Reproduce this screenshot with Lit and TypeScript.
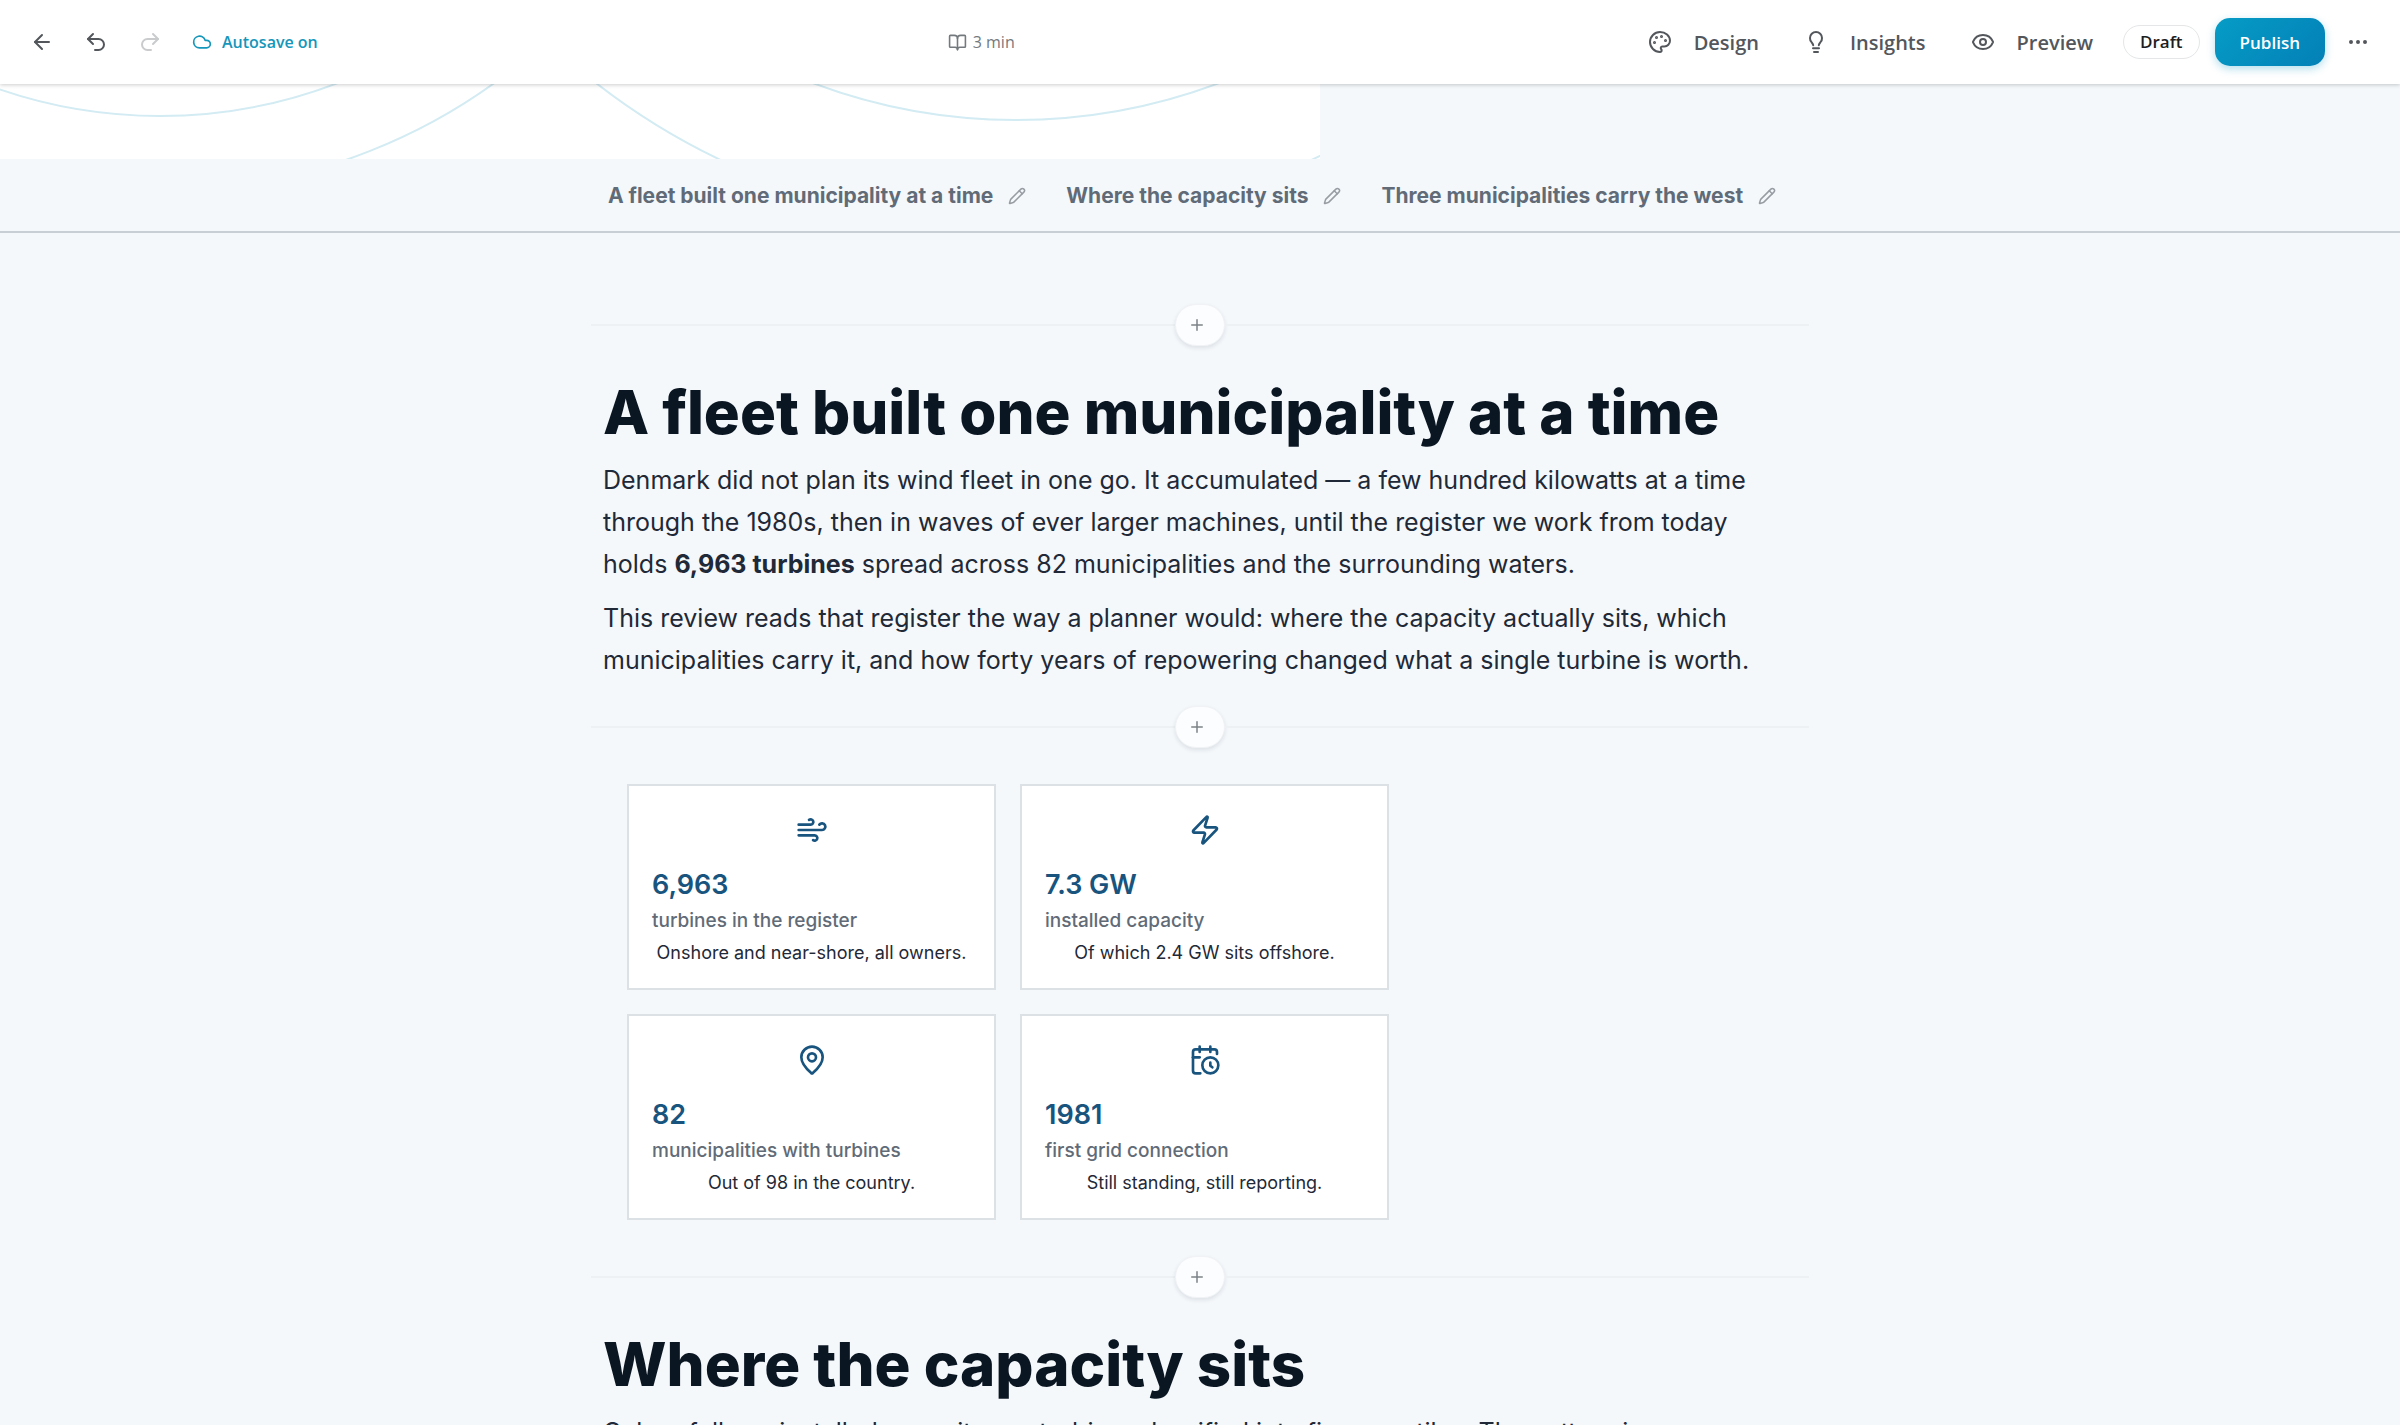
import { LitElement, html, css, svg, nothing } from "lit";
import { customElement, property } from "lit/decorators.js";

const icons: Record<string, unknown> = {
  back: svg`<path d="m12 19-7-7 7-7"/><path d="M19 12H5"/>`,
  undo: svg`<path d="M9 14 4 9l5-5"/><path d="M4 9h10.5a5.5 5.5 0 0 1 0 11H11"/>`,
  redo: svg`<path d="m15 14 5-5-5-5"/><path d="M20 9H9.500a5.500 5.500 0 0 0 0 11H13"/>`,
  cloud: svg`<path d="M17.5 19H9a7 7 0 1 1 6.710-9h1.790a4.500 4.500 0 1 1 0 9Z"/>`,
  book: svg`<path d="M12 7v14"/><path d="M3 18a1 1 0 0 1-1-1V4a1 1 0 0 1 1-1h5a4 4 0 0 1 4 4 4 4 0 0 1 4-4h5a1 1 0 0 1 1 1v13a1 1 0 0 1-1 1h-6a3 3 0 0 0-3 3 3 3 0 0 0-3-3z"/>`,
  palette: svg`<circle cx="13.500" cy="6.500" r=".5" fill="currentColor"/><circle cx="17.500" cy="10.500" r=".5" fill="currentColor"/><circle cx="8.500" cy="7.500" r=".5" fill="currentColor"/><circle cx="6.500" cy="12.500" r=".5" fill="currentColor"/><path d="M12 2C6.500 2 2 6.500 2 12s4.500 10 10 10c.926 0 1.648-.746 1.648-1.688 0-.437-.18-.835-.437-1.125-.29-.289-.438-.652-.438-1.125a1.640 1.640 0 0 1 1.668-1.668h1.996c3.051 0 5.555-2.503 5.555-5.554C21.965 6.012 17.461 2 12 2z"/>`,
  bulb: svg`<path d="M9.200 15.200c-.2-1.200-.8-1.900-1.500-2.800A5.800 5.800 0 0 1 6 8a6 6 0 0 1 12 0 5.800 5.800 0 0 1-1.700 4.400c-.7.9-1.300 1.600-1.500 2.800"/><path d="M9 18.200h6"/><path d="M10 22h4"/>`,
  eye: svg`<path d="M2.062 12.348a1 1 0 0 1 0-.696 10.750 10.750 0 0 1 19.876 0 1 1 0 0 1 0 .696 10.750 10.750 0 0 1-19.876 0"/><circle cx="12" cy="12" r="3"/>`,
  more: svg`<circle cx="12" cy="12" r="1"/><circle cx="19" cy="12" r="1"/><circle cx="5" cy="12" r="1"/>`,
  pencil: svg`<path d="M21.174 6.812a1 1 0 0 0-3.986-3.987L3.842 16.174a2 2 0 0 0-.5.830l-1.321 4.352a.5.5 0 0 0 .623.622l4.353-1.320a2 2 0 0 0 .830-.497z"/><path d="m15 5 4 4"/>`,
  plus: svg`<path d="M5 12h14"/><path d="M12 5v14"/>`,
  wind: svg`<path d="M12.800 19.600A2 2 0 1 0 14 16H2"/><path d="M17.500 8a2.500 2.500 0 1 1 2 4H2"/><path d="M9.800 4.400A2 2 0 1 1 11 8H2"/>`,
  zap: svg`<path d="M4 14a1 1 0 0 1-.78-1.630l9.900-10.200a.5.5 0 0 1 .86.460l-1.920 6.020A1 1 0 0 0 13 10h7a1 1 0 0 1 .78 1.630l-9.900 10.200a.5.5 0 0 1-.86-.460l1.920-6.020A1 1 0 0 0 11 14z"/>`,
  pin: svg`<path d="M20 10c0 4.993-5.539 10.193-7.399 11.799a1 1 0 0 1-1.202 0C9.539 20.193 4 14.993 4 10a8 8 0 0 1 16 0"/><circle cx="12" cy="10" r="3"/>`,
  calendar: svg`<path d="M21 7.500V6a2 2 0 0 0-2-2H5a2 2 0 0 0-2 2v14a2 2 0 0 0 2 2h3.500"/><path d="M16 2v4"/><path d="M8 2v4"/><path d="M3 10h5"/><path d="M17.500 17.500 16 16.300V14"/><circle cx="16" cy="16" r="6"/>`,
};

@customElement("ui-icon")
class UiIcon extends LitElement {
  @property() name = "";
  @property({ type: Number }) size = 20;

  static styles = css`
    :host { display: inline-flex; flex: none; }
    svg { display: block; }
  `;

  render() {
    return html`<svg width=${this.size} height=${this.size} viewBox="0 0 24 24" fill="none"
      stroke="currentColor" stroke-width="2" stroke-linecap="round"
      stroke-linejoin="round" aria-hidden="true">${icons[this.name] ?? nothing}</svg>`;
  }
}

@customElement("insert-row")
class InsertRow extends LitElement {
  static styles = css`
    :host { display: flex; align-items: center; height: 48px; }
    .line { flex: 1; height: 2px; background: #edf1f4; }
    .add {
      display: flex; align-items: center; box-sizing: border-box;
      width: 50px; height: 42px; padding: 0 12px; border: 1px solid #f0f2f5;
      border-radius: 21px; background: #fcfdfe; color: #7c8287;
      box-shadow: 0 2px 4px rgba(20, 30, 45, 0.1); cursor: pointer;
    }
  `;

  render() {
    return html`
      <span class="line"></span>
      <button class="add" aria-label="Add block"><ui-icon name="plus" size="18"></ui-icon></button>
      <span class="line"></span>
    `;
  }
}

const sections = [
  "A fleet built one municipality at a time",
  "Where the capacity sits",
  "Three municipalities carry the west",
];

const stats = [
  { icon: "wind", value: "6,963", label: "turbines in the register", note: "Onshore and near-shore, all owners." },
  { icon: "zap", value: "7.3 GW", label: "installed capacity", note: "Of which 2.4 GW sits offshore." },
  { icon: "pin", value: "82", label: "municipalities with turbines", note: "Out of 98 in the country." },
  { icon: "calendar", value: "1981", label: "first grid connection", note: "Still standing, still reporting." },
];

@customElement("app-root")
class AppRoot extends LitElement {
  static styles = css`
    :host {
      display: block; height: 100vh; overflow: hidden;
      background: #f4f8fb; color: #1f2937;
      font-family: Inter, "Liberation Sans", sans-serif;
    }
    button { font: inherit; margin: 0; cursor: pointer; }
    .topbar {
      position: relative; display: flex; justify-content: space-between;
      align-items: center; box-sizing: border-box; height: 84px; padding: 0 24px;
      background: #fff; box-shadow: 0 1px 4px rgba(0, 0, 0, 0.2);
      font-family: "Open Sans", "Noto Sans", sans-serif; color: #53575c;
    }
    .left, .right, .reading, .autosave { display: flex; align-items: center; }
    .left { gap: 18px; }
    .tool {
      display: flex; align-items: center; justify-content: center;
      width: 36px; height: 36px; padding: 0; border: 0; background: none; color: #53575c;
    }
    .tool:disabled { color: #c9cbcd; }
    .autosave { gap: 10px; padding-left: 6px; font-size: 16px; font-weight: 600; color: #1596ba; }
    .reading { gap: 6px; padding-left: 12px; font-size: 16px; color: #74797e; }
    .right { gap: 15px; }
    .menu {
      display: flex; align-items: center; gap: 22px; padding: 0 15px; border: 0;
      background: none; color: #53575c; font-size: 20px; font-weight: 600;
    }
    .status {
      height: 34px; padding: 0 16px; border: 1px solid #e4e6e8; border-radius: 17px;
      background: #fff; color: #1b1e22; font-size: 17px; font-weight: 600; line-height: 32px;
    }
    .publish {
      height: 48px; padding: 0 25px; border: 0; border-radius: 15px; color: #fff;
      background: linear-gradient(135deg, #069cc6, #0380b7);
      box-shadow: 0 3px 9px rgba(6, 150, 195, 0.3);
      font-size: 17px; font-weight: 600;
    }
    .cover { display: block; width: 55%; height: 75px; background: #fff; }
    .sections {
      display: flex; justify-content: center; gap: 24px; box-sizing: border-box;
      height: 74px; padding: 19px 0; border-bottom: 2px solid #c8d0d5;
    }
    .tab { display: flex; align-items: center; gap: 15px; height: 35px; padding-right: 16px; }
    .tab a { color: #616b77; font-size: 21px; font-weight: 700; text-decoration: none; }
    .edit { display: flex; padding: 0; border: 0; background: none; color: #979da3; }
    .content { max-width: 1218px; margin: 68px auto 0; }
    .text { padding: 0 12px 10px; }
    h2 {
      margin: 0; padding: 25px 0 8px; color: #0b1623;
      font-size: 60px; font-weight: 800; line-height: 77px;
    }
    p { margin: 0 0 12px; font-size: 25px; line-height: 42px; color: #1f2937; }
    .stats {
      display: grid; grid-template-columns: repeat(2, 369px); gap: 24px;
      padding: 33px 36px;
    }
    .card {
      display: flex; flex-direction: column; box-sizing: border-box;
      padding: 28px 23px 20px; border: 2px solid #dce1e5; background: #fff;
    }
    .card ui-icon { align-self: center; color: #18547e; }
    .value { margin-top: 20px; color: #18547e; font-size: 27px; font-weight: 600; line-height: 38px; }
    .label { color: #616b77; font-size: 19px; font-weight: 500; line-height: 34px; }
    .note { color: #1f2937; font-size: 18px; line-height: 30px; text-align: center; }
  `;

  render() {
    return html`
      <header class="topbar">
        <div class="left">
          <button class="tool" aria-label="Back"><ui-icon name="back" size="24"></ui-icon></button>
          <button class="tool" aria-label="Undo"><ui-icon name="undo" size="24"></ui-icon></button>
          <button class="tool" aria-label="Redo" disabled><ui-icon name="redo" size="24"></ui-icon></button>
          <span class="autosave"><ui-icon name="cloud"></ui-icon>Autosave on</span>
        </div>
        <div class="reading"><ui-icon name="book" size="19"></ui-icon>3 min</div>
        <div class="right">
          <button class="menu"><ui-icon name="palette" size="24"></ui-icon>Design</button>
          <button class="menu"><ui-icon name="bulb" size="24"></ui-icon>Insights</button>
          <button class="menu"><ui-icon name="eye" size="24"></ui-icon>Preview</button>
          <button class="status">Draft</button>
          <button class="publish">Publish</button>
          <button class="tool" aria-label="More"><ui-icon name="more" size="24"></ui-icon></button>
        </div>
      </header>
      <svg class="cover" viewBox="0 84 1320 75" preserveAspectRatio="xMinYMin slice" aria-hidden="true">
        <g fill="none" stroke="#d3ebf3" stroke-width="2">
          <circle cx="160" cy="-380" r="496"/>
          <circle cx="160" cy="-380" r="571"/>
          <circle cx="1016" cy="-457" r="577"/>
          <circle cx="1016" cy="-457" r="684"/>
        </g>
      </svg>
      <nav class="sections">
        ${sections.map((title, i) => html`
          <div class="tab">
            <a href="#s${i}">${title}</a>
            <button class="edit" aria-label="Edit ${title}"><ui-icon name="pencil" size="18"></ui-icon></button>
          </div>`)}
      </nav>
      <main class="content">
        <insert-row></insert-row>
        <section class="text">
          <h2 id="s0">A fleet built one municipality at a time</h2>
          <p>Denmark did not plan its wind fleet in one go. It accumulated — a few hundred kilowatts at a time through the 1980s, then in waves of ever larger machines, until the register we work from today holds <strong>6,963 turbines</strong> spread across 82 municipalities and the surrounding waters.</p>
          <p>This review reads that register the way a planner would: where the capacity actually sits, which municipalities carry it, and how forty years of repowering changed what a single turbine is worth.</p>
        </section>
        <insert-row></insert-row>
        <div class="stats">
          ${stats.map((s) => html`
            <article class="card">
              <ui-icon name=${s.icon} size="32"></ui-icon>
              <div class="value">${s.value}</div>
              <div class="label">${s.label}</div>
              <div class="note">${s.note}</div>
            </article>`)}
        </div>
        <insert-row></insert-row>
        <section class="text">
          <h2 id="s1">Where the capacity sits</h2>
          <p>Colour follows installed capacity per turbine, classified into five quantiles. The pattern is</p>
        </section>
      </main>
    `;
  }
}
